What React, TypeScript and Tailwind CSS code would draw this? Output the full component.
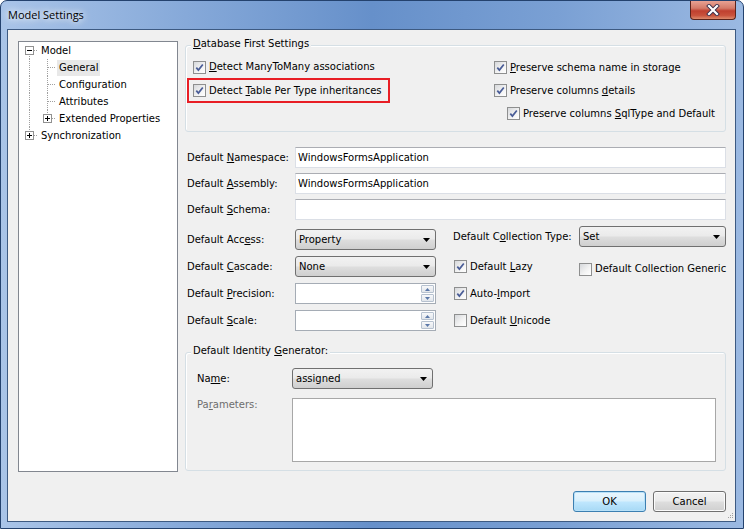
import type { ReactNode } from "react";

const U = ({ children }: { children: ReactNode }) => (
  <u className="underline decoration-1 underline-offset-[1px]">{children}</u>
);

function Check({ checked }: { checked?: boolean }) {
  return (
    <span className="flex h-[13px] w-[13px] shrink-0 items-center justify-center border border-[#8e8f8f] bg-[linear-gradient(135deg,#d6d8db_0%,#f4f4f4_60%,#ffffff_100%)]">
      {checked && (
        <svg width="11" height="11" viewBox="0 0 11 11">
          <path d="M2.3 5.6 L4.4 8.1 L8.8 2.4" fill="none" stroke="#4a5d97" strokeWidth="1.7" />
        </svg>
      )}
    </span>
  );
}

function CheckRow({ checked, children }: { checked?: boolean; children: ReactNode }) {
  return (
    <div className="flex items-center whitespace-nowrap">
      <Check checked={checked} />
      <span className="ml-[3px] leading-[12px]">{children}</span>
    </div>
  );
}

function Combo({ value, className }: { value: string; className: string }) {
  return (
    <div
      className={`flex h-[21px] shrink-0 items-center rounded-[3px] border border-[#707070] bg-[linear-gradient(#f2f2f2_0%,#ebebeb_45%,#dddddd_55%,#cfcfcf_100%)] pl-[3px] pr-[5px] ${className}`}
    >
      <span className="flex-1 leading-[12px]">{value}</span>
      <svg width="7" height="4" viewBox="0 0 7 4">
        <path d="M0 0h7L3.5 4z" fill="#000" />
      </svg>
    </div>
  );
}

function SpinBtn({ up }: { up?: boolean }) {
  return (
    <div className="flex flex-1 items-center justify-center rounded-[1px] border border-[#b6c1cf] bg-[linear-gradient(#f7f8fa,#e2e6eb)]">
      <svg width="5" height="3" viewBox="0 0 5 3">
        <path d={up ? "M0 3h5L2.5 0z" : "M0 0h5L2.5 3z"} fill="#5b78a8" />
      </svg>
    </div>
  );
}

function Spin() {
  return (
    <div className="flex h-[21px] w-[141px] shrink-0 border border-[#a5acb5] bg-white py-[1px] pr-[1px]">
      <div className="flex-1" />
      <div className="flex w-[13px] flex-col gap-[1px]">
        <SpinBtn up />
        <SpinBtn />
      </div>
    </div>
  );
}

function TextBox({ value }: { value?: string }) {
  return (
    <div className="flex h-[21px] flex-1 items-center border border-[#dbdfe6] border-t-[#abadb3] bg-white pl-[2px] leading-[12px]">
      {value}
    </div>
  );
}

type CellSpec = { up?: boolean; down?: boolean; right?: boolean; box?: "+" | "-" };

function TreeCell({ up, down, right, box }: CellSpec) {
  return (
    <svg width="18" height="17" viewBox="0 0 18 17" className="shrink-0">
      {up && <line x1="9.5" y1="0" x2="9.5" y2="8" stroke="#a0a0a0" strokeDasharray="1 1" />}
      {down && <line x1="9.5" y1="8" x2="9.5" y2="17" stroke="#a0a0a0" strokeDasharray="1 1" />}
      {right && <line x1="10" y1="8.5" x2="18" y2="8.5" stroke="#a0a0a0" strokeDasharray="1 1" />}
      {box && (
        <g>
          <rect x="5.5" y="4.5" width="8" height="8" fill="#fff" stroke="#919191" />
          <line x1="7" y1="8.5" x2="12" y2="8.5" stroke="#000" />
          {box === "+" && <line x1="9.5" y1="6" x2="9.5" y2="11" stroke="#000" />}
        </g>
      )}
    </svg>
  );
}

const TREE: { cells: CellSpec[]; label: string; selected?: boolean }[] = [
  { cells: [{ down: true, right: true, box: "-" }], label: "Model" },
  { cells: [{ up: true, down: true }, { up: true, down: true, right: true }], label: "General", selected: true },
  { cells: [{ up: true, down: true }, { up: true, down: true, right: true }], label: "Configuration" },
  { cells: [{ up: true, down: true }, { up: true, down: true, right: true }], label: "Attributes" },
  { cells: [{ up: true, down: true }, { up: true, right: true, box: "+" }], label: "Extended Properties" },
  { cells: [{ up: true, right: true, box: "+" }], label: "Synchronization" },
];

function Tree() {
  return (
    <div className="h-[431px] w-[160px] shrink-0 border border-[#828790] bg-white pl-[1px]">
      {TREE.map((row) => (
        <div key={row.label} className="flex h-[17px] items-center">
          {row.cells.map((c, i) => (
            <TreeCell key={i} {...c} />
          ))}
          <span className={`ml-[1px] px-[2px] leading-[16px] ${row.selected ? "bg-[#e8e8e8]" : ""}`}>
            {row.label}
          </span>
        </div>
      ))}
    </div>
  );
}

function Group({ legend, className, children }: { legend: ReactNode; className: string; children: ReactNode }) {
  return (
    <div className={`relative rounded-[3px] border border-[#d5dfe5] shadow-[inset_1px_1px_0_#ffffff] ${className}`}>
      <span className="absolute -top-[8px] left-[5px] bg-[#f0f0f0] px-[2px] leading-[12px]">{legend}</span>
      {children}
    </div>
  );
}

function Button({ primary, children }: { primary?: boolean; children: ReactNode }) {
  return (
    <div
      className={`flex h-[21px] w-[73px] items-center justify-center rounded-[3px] border leading-[12px] ${
        primary
          ? "border-[#3c7fb1] bg-[linear-gradient(#eaf6fd_0%,#d9f0fc_45%,#bee6fd_55%,#a7d9f5_100%)] shadow-[inset_0_0_0_1px_#b8e1f8]"
          : "border-[#707070] bg-[linear-gradient(#f2f2f2_0%,#ebebeb_45%,#dddddd_55%,#cfcfcf_100%)] shadow-[inset_0_0_0_1px_#fbfbfb]"
      }`}
    >
      {children}
    </div>
  );
}

export default function App() {
  return (
    <div className="flex h-[529px] w-[744px] flex-col rounded-t-[7px] border border-[#24426e] bg-[linear-gradient(90deg,#a9c4e8_0%,#86a9d9_25%,#6690ca_50%,#7aa0d4_75%,#9bb9e2_100%)] font-['DejaVu_Sans',sans-serif] text-[10px] text-black">
      <div className="flex h-[28px] items-start justify-between">
        <span className="ml-[7px] mt-[7px] font-['Open_Sans',sans-serif] text-[11px] leading-[14px] [text-shadow:0_0_6px_#ffffff,0_0_10px_#ffffff]">
          Model Settings
        </span>
        <div className="mr-[7px] flex h-[19px] w-[46px] items-center justify-center rounded-b-[4px] border border-t-0 border-[#5a231b] bg-[linear-gradient(#e8a293_0%,#d47a68_40%,#c0402f_55%,#c9523c_80%,#dd8a6c_100%)]">
          <svg width="14" height="12" viewBox="0 0 14 12">
            <path d="M3 2 L11 10 M11 2 L3 10" stroke="#3b2f4a" strokeWidth="4" strokeLinecap="square" />
            <path d="M3 2 L11 10 M11 2 L3 10" stroke="#ffffff" strokeWidth="2.2" strokeLinecap="square" />
          </svg>
        </div>
      </div>

      <div className="relative mb-[6px] ml-[6px] mr-[7px] flex h-[493px] flex-col border border-[#3d5a82] bg-[#f0f0f0] pb-[9px] pl-[10px] pr-[9px] pt-[11px]">
        <div className="flex gap-[7px]">
          <Tree />

          <div className="mt-[4px] flex w-[541px] flex-col">
            <Group
              className="flex h-[87px] pl-[1px] pt-[10px]"
              legend={
                <>
                  <U>D</U>atabase First Settings
                </>
              }
            >
              <div className="flex w-[301px] flex-col items-start">
                <div className="flex h-[22px] items-center pl-[6px]">
                  <CheckRow checked>
                    <U>D</U>etect ManyToMany associations
                  </CheckRow>
                </div>
                <div className="flex h-[25px] w-[203px] items-center border-2 border-[#e81e25] pl-[4px]">
                  <CheckRow checked>
                    Detect <U>T</U>able Per Type inheritances
                  </CheckRow>
                </div>
              </div>
              <div className="flex flex-col pl-[6px]">
                <div className="flex h-[23px] items-center">
                  <CheckRow checked>
                    <U>P</U>reserve schema name in storage
                  </CheckRow>
                </div>
                <div className="flex h-[23px] items-center">
                  <CheckRow checked>
                    Preserve columns <U>d</U>etails
                  </CheckRow>
                </div>
                <div className="flex h-[23px] items-center pl-[13px]">
                  <CheckRow checked>
                    Preserve columns <U>S</U>qlType and Default
                  </CheckRow>
                </div>
              </div>
            </Group>

            <div className="mt-[15px] flex h-[21px] items-center pl-[2px]">
              <span className="w-[108px] shrink-0">
                Default <U>N</U>amespace:
              </span>
              <TextBox value="WindowsFormsApplication" />
            </div>
            <div className="mt-[5px] flex h-[21px] items-center pl-[2px]">
              <span className="w-[108px] shrink-0">
                Default <U>A</U>ssembly:
              </span>
              <TextBox value="WindowsFormsApplication" />
            </div>
            <div className="mt-[5px] flex h-[21px] items-center pl-[2px]">
              <span className="w-[108px] shrink-0">
                Default <U>S</U>chema:
              </span>
              <TextBox />
            </div>

            <div className="mt-[9px] flex h-[21px] items-center pl-[2px]">
              <span className="w-[108px] shrink-0">
                Default Acc<U>e</U>ss:
              </span>
              <Combo value="Property" className="w-[141px]" />
              <div className="mb-[6px] ml-[17px] flex items-center">
                <span className="w-[126px] shrink-0">
                  Default C<U>o</U>llection Type:
                </span>
                <Combo value="Set" className="w-[147px]" />
              </div>
            </div>
            <div className="mt-[6px] flex h-[21px] items-center pl-[2px]">
              <span className="w-[108px] shrink-0">
                Default <U>C</U>ascade:
              </span>
              <Combo value="None" className="w-[141px]" />
              <div className="ml-[18px] w-[125px] shrink-0">
                <CheckRow checked>
                  Default <U>L</U>azy
                </CheckRow>
              </div>
              <div className="mt-[5px] shrink-0">
                <CheckRow>Default Collection Generic</CheckRow>
              </div>
            </div>
            <div className="mt-[6px] flex h-[21px] items-center pl-[2px]">
              <span className="w-[108px] shrink-0">
                Default <U>P</U>recision:
              </span>
              <Spin />
              <div className="ml-[18px]">
                <CheckRow checked>
                  Auto-<U>I</U>mport
                </CheckRow>
              </div>
            </div>
            <div className="mt-[6px] flex h-[21px] items-center pl-[2px]">
              <span className="w-[108px] shrink-0">
                Default <U>S</U>cale:
              </span>
              <Spin />
              <div className="ml-[18px]">
                <CheckRow>
                  Default <U>U</U>nicode
                </CheckRow>
              </div>
            </div>

            <Group
              className="mt-[21px] h-[119px] pl-[11px] pt-[15px]"
              legend={
                <>
                  Default Identity <U>G</U>enerator:
                </>
              }
            >
              <div className="flex h-[21px] items-center">
                <span className="w-[95px] shrink-0">
                  Na<U>m</U>e:
                </span>
                <Combo value="assigned" className="w-[141px]" />
              </div>
              <div className="mt-[9px] flex items-start">
                <span className="w-[95px] shrink-0 pt-[1px] leading-[12px] text-[#6d6d6d]">
                  Pa<U>r</U>ameters:
                </span>
                <div className="h-[64px] w-[424px] border border-[#a7a7a7] bg-white" />
              </div>
            </Group>
          </div>
        </div>

        <div className="mt-auto flex justify-end gap-[7px]">
          <Button primary>OK</Button>
          <Button>Cancel</Button>
        </div>

        <svg width="7" height="7" viewBox="0 0 7 7" className="absolute bottom-[2px] right-[1px]">
          <rect x="5" y="1" width="1" height="1" fill="#a0a0a0" />
          <rect x="3" y="3" width="1" height="1" fill="#a0a0a0" />
          <rect x="5" y="3" width="1" height="1" fill="#a0a0a0" />
          <rect x="1" y="5" width="1" height="1" fill="#a0a0a0" />
          <rect x="3" y="5" width="1" height="1" fill="#a0a0a0" />
          <rect x="5" y="5" width="1" height="1" fill="#a0a0a0" />
        </svg>
      </div>
    </div>
  );
}
